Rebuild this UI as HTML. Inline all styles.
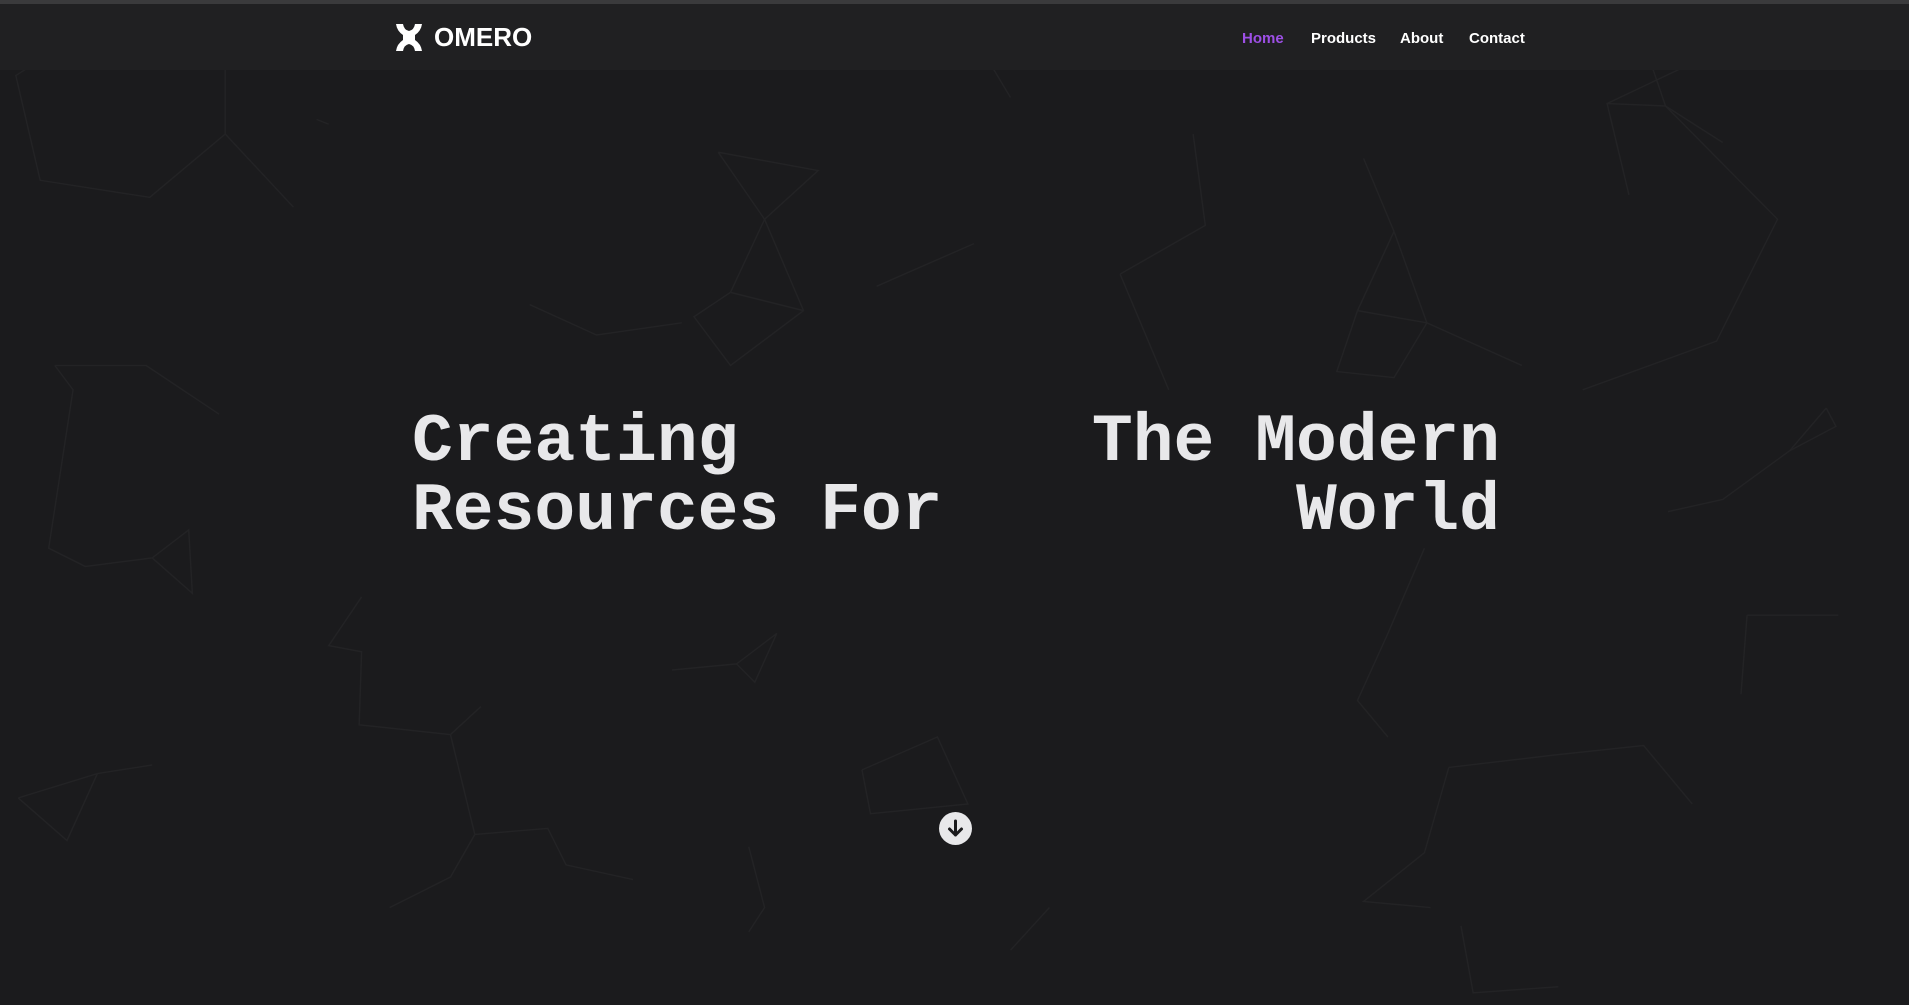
<!DOCTYPE html>
<html><head><meta charset="utf-8"><style>
html,body{margin:0;padding:0;width:1909px;height:1005px;overflow:hidden;background:#1b1b1d;}
.top{position:absolute;left:0;top:0;width:1909px;height:4px;background:#3a3a3c;}
.nav{position:absolute;left:0;top:4px;width:1909px;height:66px;background:#202022;}
svg.bg{position:absolute;left:0;top:0;}
.logo{position:absolute;left:396px;top:24px;}
.brand{position:absolute;left:434px;top:22px;font:bold 26px "Liberation Sans",sans-serif;color:#fff;}
.links a{position:absolute;top:30px;font:bold 15px "Liberation Sans",sans-serif;color:#fff;text-decoration:none;}
.h{position:absolute;left:412px;width:1088px;font:bold 68px "Liberation Mono",monospace;color:#e8e8ea;display:flex;justify-content:space-between;white-space:pre;line-height:70px;}
.btn{position:absolute;left:939px;top:812px;width:33px;height:33px;border-radius:50%;background:#e8e8ea;}
</style></head><body>
<svg class="bg" width="1909" height="1005" viewBox="0 0 1568 825" preserveAspectRatio="none" fill="none" stroke="#232325" stroke-width="1.2">
<polyline points="95,10 13,62 33,148 123,162 185,110 185,0"/><polyline points="185,110 241,170"/>
<polyline points="590,125 628,180 600,240 570,260 600,300 660,255 628,180 672,140 590,125"/>
<polyline points="600,240 660,255"/><polyline points="435,250 490,275 560,265"/><polyline points="720,235 800,200"/>
<polyline points="1320,85 1368,87 1415,117 1368,87 1352,40 1415,40 1320,85 1338,160"/><polyline points="1368,87 1460,180 1410,280 1300,320"/>
<polyline points="1120,130 1145,190 1172,265 1145,310 1098,305 1115,255 1172,265 1250,300"/><polyline points="1115,255 1145,190"/>
<polyline points="920,225 990,185 980,110"/><polyline points="920,225 960,320"/>
<polyline points="45,300 120,300 180,340"/><polyline points="45,300 60,320 40,450 70,465 125,458 158,487 155,435 125,458"/>
<polyline points="1500,335 1470,370 1415,410 1370,420"/><polyline points="1500,335 1508,350 1470,370"/>
<polyline points="297,490 270,530 297,535 295,595 370,603 395,580"/><polyline points="370,603 390,685 450,680 465,710 520,722"/><polyline points="390,685 370,720 320,745"/>
<polyline points="552,550 605,545 638,520 620,560 605,545"/>
<polyline points="15,655 80,635 125,628"/><polyline points="15,655 55,690 80,635"/>
<polyline points="708,632 770,605 795,660 715,668 708,632"/>
<polyline points="1170,450 1140,520 1115,575 1140,605"/><polyline points="1190,630 1275,620 1350,612 1390,660"/><polyline points="1190,630 1170,700 1120,740 1175,745"/>
<polyline points="1435,505 1510,505"/><polyline points="1435,505 1430,570"/>
<polyline points="615,695 628,745 615,765"/><polyline points="862,745 830,780"/><polyline points="1200,760 1210,815 1280,810"/>
<polyline points="700,15 800,30 830,80"/><polyline points="260,98 270,102"/>
</svg>
<div class="top"></div>
<div class="nav"></div>
<svg class="logo" width="26" height="27" viewBox="0 0 26 27"><path fill="#fff" d="M0 0h7q1 6 6 7 5-1 6-7h7q-1 7-7 11v5q6 4 7 11h-7q-1-6-6-7-5 1-6 7H0q1-7 7-11v-5Q1 7 0 0z"/></svg>
<div class="brand">OMERO</div>
<div class="links"><a style="left:1242px;color:#9d4fe6">Home</a><a style="left:1311px">Products</a><a style="left:1400px">About</a><a style="left:1469px">Contact</a></div>
<div class="h" style="top:408px"><span>Creating</span><span>The Modern</span></div>
<div class="h" style="top:477px"><span>Resources For</span><span>World</span></div>
<div class="btn"><svg width="33" height="33" viewBox="0 0 33 33"><path d="M16.5 9v14M10.5 17l6 6 6-6" stroke="#1b1b1d" stroke-width="3" fill="none" stroke-linecap="round" stroke-linejoin="round"/></svg></div>
</body></html>
